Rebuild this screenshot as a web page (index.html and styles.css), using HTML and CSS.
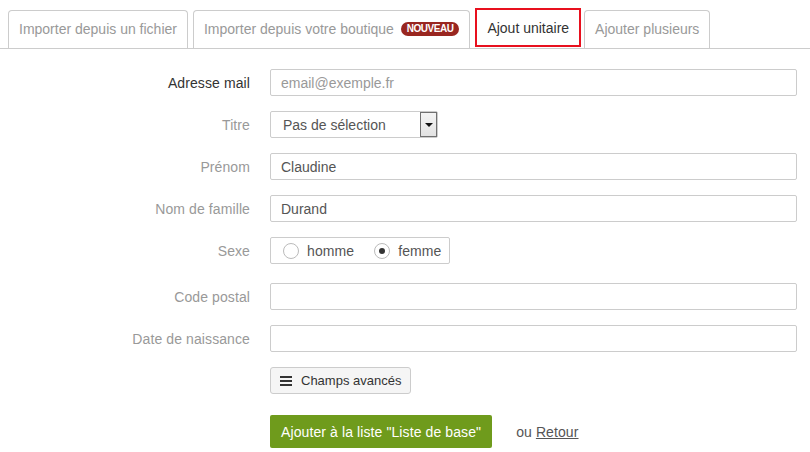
FILE: index.html
```html
<!DOCTYPE html>
<html lang="fr">
<head>
    <meta charset="UTF-8">
    <meta name="viewport" content="width=device-width, initial-scale=1.0">
    <title>Ajout unitaire</title>
    <link rel="stylesheet" href="styles.css">
</head>
<body>
    <nav class="tabs">
        <a href="#" class="tab">Importer depuis un fichier</a>
        <a href="#" class="tab">Importer depuis votre boutique <span class="badge">Nouveau</span></a>
        <a href="#" class="tab active">Ajout unitaire</a>
        <a href="#" class="tab">Ajouter plusieurs</a>
    </nav>

    <form class="contact-form">
        <div class="form-row">
            <label class="required" for="email">Adresse mail</label>
            <input class="text-input" id="email" type="text" placeholder="email@exemple.fr">
        </div>
        <div class="form-row">
            <label for="titre">Titre</label>
            <div class="select-wrap">
                <select id="titre" class="select">
                    <option>Pas de sélection</option>
                    <option>Madame</option>
                    <option>Monsieur</option>
                </select>
                <span class="select-arrow"></span>
            </div>
        </div>
        <div class="form-row">
            <label for="prenom">Prénom</label>
            <input class="text-input" id="prenom" type="text" value="Claudine">
        </div>
        <div class="form-row">
            <label for="nom">Nom de famille</label>
            <input class="text-input" id="nom" type="text" value="Durand">
        </div>
        <div class="form-row spaced">
            <label>Sexe</label>
            <div class="radio-group">
                <label class="radio"><span class="radio-dot"></span>homme</label>
                <label class="radio"><span class="radio-dot checked"></span>femme</label>
            </div>
        </div>
        <div class="form-row">
            <label for="cp">Code postal</label>
            <input class="text-input" id="cp" type="text">
        </div>
        <div class="form-row">
            <label for="naissance">Date de naissance</label>
            <input class="text-input" id="naissance" type="text">
        </div>
        <div class="form-row spaced-more">
            <span></span>
            <div>
                <button type="button" class="btn-advanced">
                    <span class="burger"><i></i><i></i><i></i></span>
                    Champs avancés
                </button>
            </div>
        </div>
        <div class="form-row">
            <span></span>
            <div class="actions">
                <button type="submit" class="btn-submit">Ajouter à la liste "Liste de base"</button>
                <span class="back">ou <a href="#">Retour</a></span>
            </div>
        </div>
    </form>
</body>
</html>
```

FILE: styles.css
```css
* {
    margin: 0;
    padding: 0;
    box-sizing: border-box;
}

body {
    font-family: "Liberation Sans", Arial, sans-serif;
    font-size: 14px;
    letter-spacing: 0.1px;
    color: #555;
    background: #fff;
}

.tabs {
    display: flex;
    align-items: flex-end;
    padding: 0 0 0 8px;
    height: 49px;
    border-bottom: 1px solid #ccc;
    letter-spacing: 0;
}

.tab {
    display: flex;
    align-items: center;
    margin-right: 5px;
    padding: 8px 10px 9px;
    line-height: 20px;
    color: #999;
    text-decoration: none;
    border: 1px solid #ccc;
    border-bottom: none;
    border-radius: 4px 4px 0 0;
}

.tab.active {
    color: #333;
    padding: 8px 10px 7px;
    margin-right: 3px;
    margin-bottom: 1px;
    border: 2px solid #e8101e;
    border-radius: 0;
}

.badge {
    display: inline-block;
    margin-left: 7px;
    padding: 0 6px;
    height: 14px;
    line-height: 14px;
    font-size: 10px;
    font-weight: bold;
    letter-spacing: -0.5px;
    text-transform: uppercase;
    color: #fff;
    background: #992620;
    border-radius: 7px;
}

.contact-form {
    display: flex;
    flex-direction: column;
    gap: 15px;
    padding: 20px 13px 0 0;
}

.form-row {
    display: grid;
    grid-template-columns: 250px 1fr;
    column-gap: 20px;
    align-items: center;
}

.form-row.spaced {
    margin-bottom: 4px;
}

.form-row.spaced-more {
    margin-bottom: 6px;
}

.form-row > label {
    text-align: right;
    color: #999;
}

.form-row > label.required {
    color: #333;
}

.text-input {
    width: 100%;
    height: 27px;
    padding: 0 10px;
    font: inherit;
    color: #555;
    border: 1px solid #ccc;
    border-radius: 2px;
    outline: none;
}

.text-input::placeholder {
    color: #999;
}

.select-wrap {
    position: relative;
    width: 168px;
    height: 27px;
}

.select {
    appearance: none;
    width: 100%;
    height: 100%;
    padding: 0 12px;
    font: inherit;
    color: #555;
    background: #fff;
    border: 1px solid #ccc;
    border-radius: 2px;
}

.select-arrow {
    position: absolute;
    top: 1px;
    right: 1px;
    width: 17px;
    height: 25px;
    border: 1px solid #707070;
    background: linear-gradient(#f4f4f4, #e2e2e2);
    pointer-events: none;
}

.select-arrow::after {
    content: "";
    position: absolute;
    top: 10px;
    left: 4px;
    border-left: 4px solid transparent;
    border-right: 4px solid transparent;
    border-top: 4px solid #111;
}

.radio-group {
    display: flex;
    align-items: center;
    gap: 20px;
    width: 180px;
    height: 27px;
    padding: 0 10px 0 12px;
    border: 1px solid #ccc;
    border-radius: 2px;
}

.radio {
    display: flex;
    align-items: center;
    gap: 8px;
    color: #555;
}

.radio-dot {
    position: relative;
    width: 16px;
    height: 16px;
    border: 1px solid #bbb;
    border-radius: 50%;
    background: #fff;
}

.radio-dot.checked::after {
    content: "";
    position: absolute;
    top: 4px;
    left: 4px;
    width: 6px;
    height: 6px;
    border-radius: 50%;
    background: #333;
}

.btn-advanced {
    display: flex;
    align-items: center;
    gap: 9px;
    height: 27px;
    padding: 0 9px;
    font: inherit;
    font-size: 13px;
    white-space: nowrap;
    color: #333;
    background: #f5f5f5;
    border: 1px solid #ccc;
    border-radius: 3px;
}

.burger {
    display: flex;
    flex-direction: column;
    gap: 2px;
    width: 12px;
}

.burger i {
    display: block;
    height: 2px;
    background: #333;
}

.actions {
    display: flex;
    align-items: center;
    gap: 24px;
}

.btn-submit {
    height: 33px;
    padding: 0 11px;
    font: inherit;
    letter-spacing: inherit;
    color: #fff;
    background: #6f9b1c;
    border: none;
    border-radius: 2px;
}

.back {
    color: #555;
}

.back a {
    color: #555;
}
```
